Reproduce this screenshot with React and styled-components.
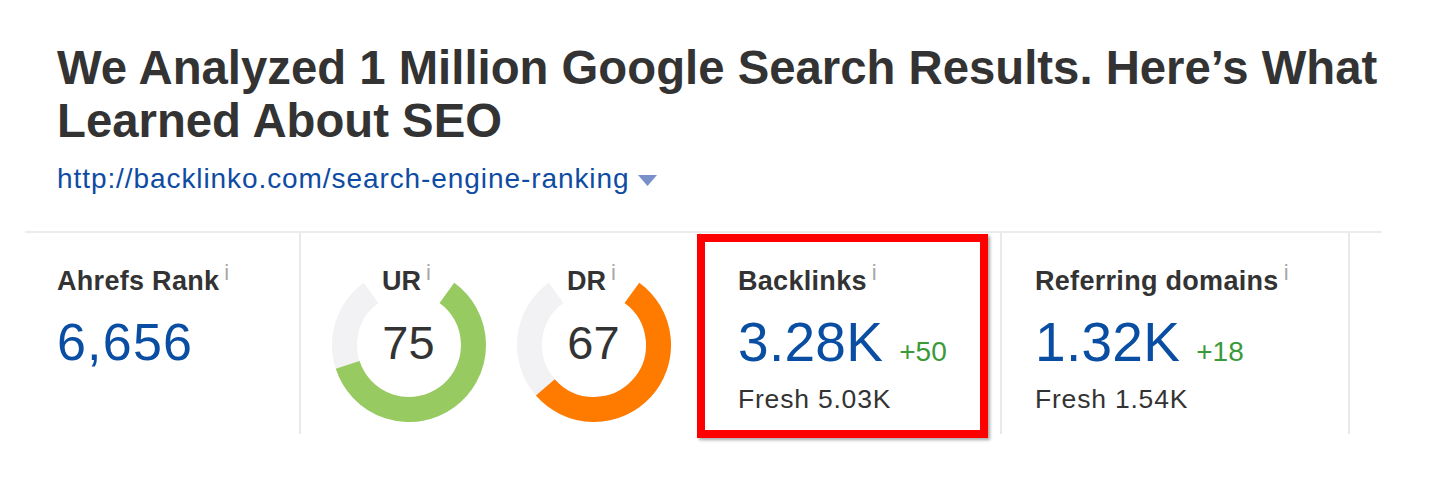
import React from "react";
import styled, { createGlobalStyle } from "styled-components";

const GlobalStyle = createGlobalStyle`
  html, body {
    margin: 0;
    padding: 0;
    background: #ffffff;
  }
  body {
    font-family: "Liberation Sans", Arial, sans-serif;
    color: #333333;
  }
`;

const Page = styled.div`
  padding-top: 41px;
  width: 1440px;
  height: 498px;
  box-sizing: border-box;
  overflow: hidden;
`;

const Header = styled.header`
  padding-left: 57px;
`;

const Title = styled.h1`
  margin: 0;
  width: 1360px;
  font-size: 47.3px;
  line-height: 53px;
  font-weight: 700;
  color: #333333;
`;

const UrlRow = styled.div`
  margin-top: 17px;
  display: flex;
  align-items: center;
  gap: 9px;
  height: 30px;
`;

const UrlLink = styled.a`
  font-size: 28px;
  line-height: 30px;
  letter-spacing: 0.92px;
  color: #0e4ba3;
  text-decoration: none;
`;

const Caret = styled.svg`
  width: 19px;
  height: 11px;
  margin-top: 2px;
  fill: #7a90c9;
`;

const StatsRow = styled.section`
  margin-top: 37px;
  margin-left: 25px;
  width: 1357px;
  height: 203px;
  box-sizing: border-box;
  border-top: 2px solid #ececec;
  display: flex;
`;

const Cell = styled.div`
  position: relative;
  box-sizing: border-box;
  width: ${(p) => p.$w}px;
  padding-left: ${(p) => p.$pl}px;
  padding-top: 29px;
  border-right: 2px solid #e9e9e9;
  display: flex;
  flex-direction: column;
`;

const GaugeCell = styled.div`
  box-sizing: border-box;
  width: 400px;
  padding-left: 30.5px;
  padding-top: 35px;
  border-right: 2px solid #e9e9e9;
  display: flex;
  gap: 31px;
`;

const Label = styled.div`
  font-size: 27px;
  line-height: 32px;
  font-weight: 700;
  letter-spacing: 0.3px;
  color: #333333;
  white-space: nowrap;
`;

const Info = styled.span`
  display: inline-block;
  margin-left: 5px;
  font-size: 22px;
  font-weight: 400;
  letter-spacing: 0;
  color: #a8a8a8;
  vertical-align: 10px;
  line-height: 1;
`;

const ValueRow = styled.div`
  margin-top: ${(p) => p.$mt}px;
  display: flex;
  align-items: baseline;
  height: 60px;
`;

const Value = styled.span`
  font-size: ${(p) => p.$size}px;
  line-height: 60px;
  letter-spacing: ${(p) => p.$ls}px;
  color: #0a4ea3;
`;

const Delta = styled.span`
  margin-left: 16px;
  font-size: 28px;
  line-height: 60px;
  color: #3a9a3a;
`;

const Fresh = styled.div`
  margin-top: 12px;
  font-size: 26.5px;
  line-height: 30px;
  letter-spacing: 0.8px;
  color: #333333;
`;

const Highlight = styled.div`
  position: absolute;
  left: -4px;
  top: 1px;
  width: 291px;
  height: 204px;
  box-sizing: border-box;
  border: 8px solid #ff0000;
  box-shadow: 2px 2px 3px rgba(0, 0, 0, 0.35);
  pointer-events: none;
`;

const Gauge = styled.div`
  position: relative;
  width: 154px;
  height: 154px;
  display: flex;
  align-items: center;
  justify-content: center;
`;

const GaugeSvg = styled.svg`
  position: absolute;
  inset: 0;
`;

const GaugeLabel = styled.div`
  position: absolute;
  top: -6px;
  left: 0;
  right: 0;
  text-align: center;
  font-size: 27px;
  line-height: 32px;
  font-weight: 700;
  color: #333333;
  padding-right: 4px;
`;

const GaugeNumber = styled.span`
  position: relative;
  margin-top: -6px;
  font-size: 47px;
  line-height: 1;
  color: #333333;
`;

function polar(cx, cy, r, deg) {
  const rad = (deg * Math.PI) / 180;
  return [cx + r * Math.sin(rad), cy - r * Math.cos(rad)];
}

function arcPath(cx, cy, r, start, end) {
  const [x1, y1] = polar(cx, cy, r, start);
  const [x2, y2] = polar(cx, cy, r, end);
  const large = end - start > 180 ? 1 : 0;
  return `M ${x1} ${y1} A ${r} ${r} 0 ${large} 1 ${x2} ${y2}`;
}

function Donut({ label, value, color }) {
  const start = 36;
  const span = 288;
  const end = start + (span * value) / 100;
  return (
    <Gauge>
      <GaugeSvg width="154" height="154" viewBox="0 0 154 154">
        <path
          d={arcPath(77, 77, 64.5, start, start + span)}
          fill="none"
          stroke="#f2f2f4"
          strokeWidth="25"
        />
        <path
          d={arcPath(77, 77, 64.5, start, end)}
          fill="none"
          stroke={color}
          strokeWidth="25"
        />
      </GaugeSvg>
      <GaugeLabel>
        {label}
        <Info>i</Info>
      </GaugeLabel>
      <GaugeNumber>{value}</GaugeNumber>
    </Gauge>
  );
}

export default function App() {
  return (
    <>
      <GlobalStyle />
      <Page>
        <Header>
          <Title>
            We Analyzed 1 Million Google Search Results. Here’s What Learned
            About SEO
          </Title>
          <UrlRow>
            <UrlLink href="#">http://backlinko.com/search-engine-ranking</UrlLink>
            <Caret viewBox="0 0 19 11">
              <polygon points="0,0 19,0 9.5,11" />
            </Caret>
          </UrlRow>
        </Header>
        <StatsRow>
          <Cell $w={276} $pl={32}>
            <Label>
              Ahrefs Rank<Info>i</Info>
            </Label>
            <ValueRow $mt={15}>
              <Value $size={52} $ls={1.2}>6,656</Value>
            </ValueRow>
          </Cell>
          <GaugeCell>
            <Donut label="UR" value={75} color="#97cb62" />
            <Donut label="DR" value={67} color="#ff7b00" />
          </GaugeCell>
          <Cell $w={301} $pl={37}>
            <Label>
              Backlinks<Info>i</Info>
            </Label>
            <ValueRow $mt={15}>
              <Value $size={55} $ls={0.3}>3.28K</Value>
              <Delta>+50</Delta>
            </ValueRow>
            <Fresh>Fresh 5.03K</Fresh>
            <Highlight />
          </Cell>
          <Cell $w={348} $pl={33}>
            <Label>
              Referring domains<Info>i</Info>
            </Label>
            <ValueRow $mt={15}>
              <Value $size={55} $ls={0.3}>1.32K</Value>
              <Delta>+18</Delta>
            </ValueRow>
            <Fresh>Fresh 1.54K</Fresh>
          </Cell>
        </StatsRow>
      </Page>
    </>
  );
}
